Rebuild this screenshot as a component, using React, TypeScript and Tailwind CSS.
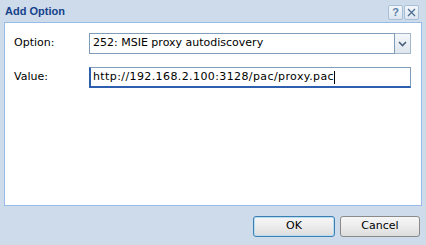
import React from 'react'

const font = { fontFamily: '"Liberation Sans", Arial, sans-serif' }
const formFont = { fontFamily: '"DejaVu Sans", Verdana, sans-serif' }

function ToolButton({ children }: { children: React.ReactNode }) {
  return (
    <div className="flex h-[15px] w-[15px] items-center justify-center rounded-[2px] border border-[#a9bfd6] bg-gradient-to-b from-[#f3f7fb] to-[#dbe5f0] text-[11px] font-bold leading-none text-[#5a7fa8]">
      {children}
    </div>
  )
}

function Button({ label, focused }: { label: string; focused?: boolean }) {
  return (
    <div
      style={formFont}
      className={
        'flex h-[21px] items-center justify-center rounded-[3px] border bg-gradient-to-b from-[#f6f6f6] via-[#ececec] to-[#dcdcdc] text-[11px] text-black ' +
        (focused ? 'w-[82px] border-[#3c7fb1] shadow-[inset_0_0_0_1px_#b6dcf3]' : 'w-[80px] border-[#8a8a8a]')
      }
    >
      {label}
    </div>
  )
}

export default function App() {
  return (
    <div className="flex h-[245px] w-[426px] flex-col bg-[#cedbea]" style={font}>
      {/* title bar */}
      <div className="flex h-[22px] items-center justify-between pl-[5px] pr-[7px]">
        <span className="text-[11px] font-bold text-[#15428b]">Add Option</span>
        <div className="flex gap-[1px] pt-[2px]">
          <ToolButton>?</ToolButton>
          <ToolButton>
            <svg width="9" height="9" viewBox="0 0 9 9">
              <path d="M1 1 L8 8 M8 1 L1 8" stroke="#4e6f95" strokeWidth="1.3" />
            </svg>
          </ToolButton>
        </div>
      </div>

      {/* form body */}
      <div className="mx-[4px] h-[184px] border border-[#99bbe8] bg-white pl-[9px] pt-[10px]" style={formFont}>
        <div className="flex h-[21px] items-center">
          <label className="w-[75px] text-[11px] text-black">Option:</label>
          <div className="flex h-[21px]">
            <div className="flex w-[306px] items-center border border-[#7f9db9] bg-white pl-[3px] text-[11px] text-black">
              252: MSIE proxy autodiscovery
            </div>
            <div className="flex w-[16px] items-center justify-center border border-l-0 border-[#a3b6cb] bg-gradient-to-b from-[#f4f7fa] to-[#dfe6ee]">
              <svg width="9" height="6" viewBox="0 0 9 6">
                <path d="M1 1 L4.5 4.5 L8 1" stroke="#4a5f7a" strokeWidth="1.6" fill="none" />
              </svg>
            </div>
          </div>
        </div>

        <div className="mt-[13px] flex h-[21px] items-center">
          <label className="w-[75px] text-[11px] text-black">Value:</label>
          <div className="flex h-[21px] w-[322px] items-center border-t border-r border-[#7f9db9] border-l-2 border-b-2 border-l-[#2d5fae] border-b-[#2d5fae] bg-white pl-[2px] text-[11px] text-black">
            <span className="tracking-[0.4px]">http://192.168.2.100:3128/pac/proxy.pac</span>
            <span className="h-[13px] w-[1px] bg-black" />
          </div>
        </div>
      </div>

      {/* buttons */}
      <div className="flex justify-end gap-[5px] pr-[6px] pt-[10px]">
        <Button label="OK" focused />
        <Button label="Cancel" />
      </div>
    </div>
  )
}
